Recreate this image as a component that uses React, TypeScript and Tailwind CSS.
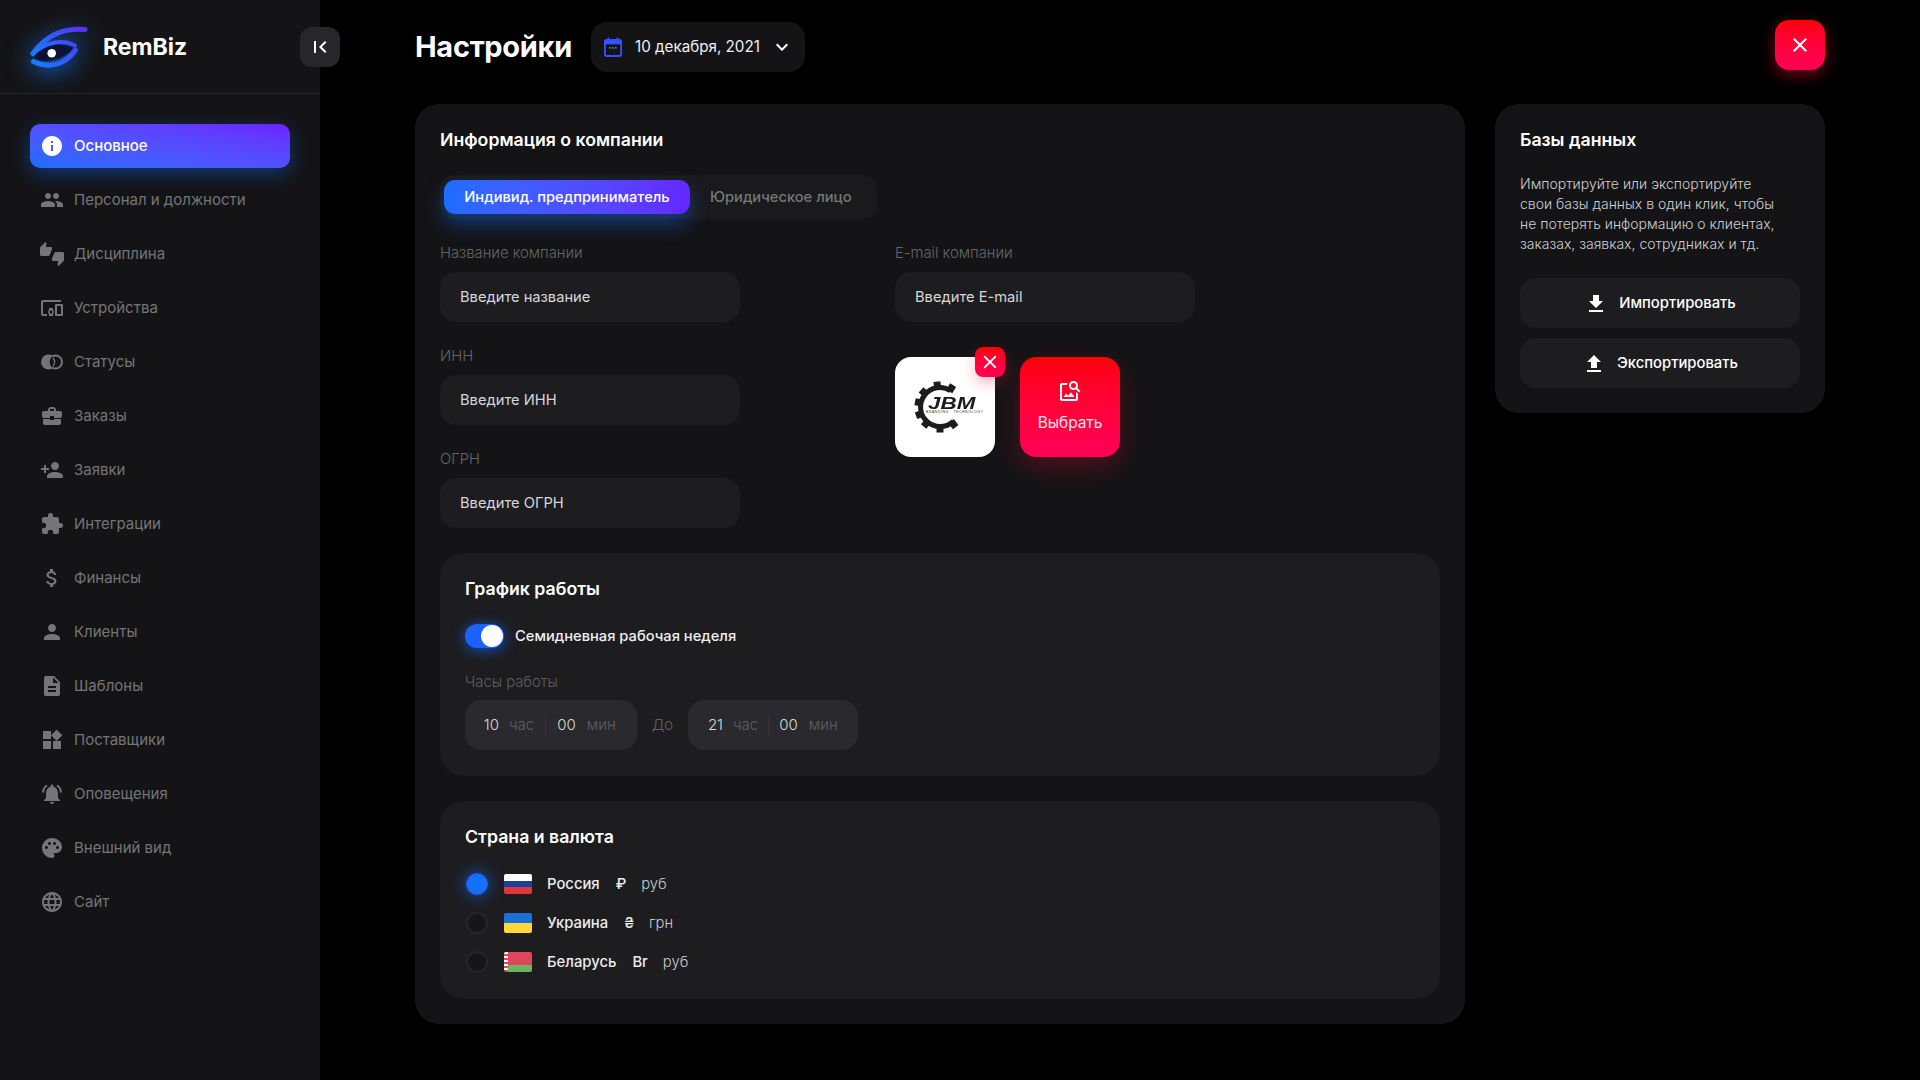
import type { ReactNode } from "react";
import {
  MdAttachMoney,
  MdBusinessCenter,
  MdClose,
  MdDescription,
  MdDevicesOther,
  MdExtension,
  MdFileDownload,
  MdFileUpload,
  MdFirstPage,
  MdImageSearch,
  MdInfo,
  MdKeyboardArrowDown,
  MdLanguage,
  MdNotificationsActive,
  MdPalette,
  MdPeople,
  MdPerson,
  MdPersonAdd,
  MdThumbsUpDown,
  MdWidgets,
} from "react-icons/md";

const FONT = "font-['Inter','Liberation_Sans',sans-serif]";

function StatusIcon({ className }: { className?: string }) {
  return (
    <svg viewBox="0 0 24 24" className={className} fill="none">
      <circle cx="8.5" cy="12" r="7.5" fill="currentColor" />
      <circle cx="15.5" cy="12" r="6.5" fill="#141416" stroke="currentColor" strokeWidth="2" />
      <path d="M12 6.6a7.5 7.5 0 0 1 0 10.8a7.5 7.5 0 0 1 0-10.8Z" fill="#141416" />
      <path d="M13 8a6 6 0 0 1 0 8" stroke="currentColor" strokeWidth="1.5" />
    </svg>
  );
}

const NAV: { label: string; icon: (c: string) => ReactNode }[] = [
  { label: "Персонал и должности", icon: (c) => <MdPeople className={c} /> },
  { label: "Дисциплина", icon: (c) => <MdThumbsUpDown className={c} /> },
  { label: "Устройства", icon: (c) => <MdDevicesOther className={c} /> },
  { label: "Статусы", icon: (c) => <StatusIcon className={c} /> },
  { label: "Заказы", icon: (c) => <MdBusinessCenter className={c} /> },
  { label: "Заявки", icon: (c) => <MdPersonAdd className={c} /> },
  { label: "Интеграции", icon: (c) => <MdExtension className={c} /> },
  { label: "Финансы", icon: (c) => <MdAttachMoney className={c} /> },
  { label: "Клиенты", icon: (c) => <MdPerson className={c} /> },
  { label: "Шаблоны", icon: (c) => <MdDescription className={c} /> },
  { label: "Поставщики", icon: (c) => <MdWidgets className={c} /> },
  { label: "Оповещения", icon: (c) => <MdNotificationsActive className={c} /> },
  { label: "Внешний вид", icon: (c) => <MdPalette className={c} /> },
  { label: "Сайт", icon: (c) => <MdLanguage className={c} /> },
];

function Logo() {
  return (
    <svg
      viewBox="0 0 60 44"
      className="h-[44px] w-[60px] shrink-0 drop-shadow-[0_5px_12px_rgba(20,120,255,0.75)]"
      fill="none"
      strokeLinecap="round"
    >
      <defs>
        <linearGradient id="logoGrad" gradientUnits="userSpaceOnUse" x1="3" y1="40" x2="56" y2="4">
          <stop offset="0" stopColor="#1580ff" />
          <stop offset="0.6" stopColor="#3a52ff" />
          <stop offset="1" stopColor="#6030f0" />
        </linearGradient>
      </defs>
      <path d="M6 29C16 20 32 16 44 23C36 34 18 39 6 34Z" fill="#0b1438" />
      <path d="M56 4.5C38 3 20 7 4 28.5" stroke="url(#logoGrad)" strokeWidth="5" />
      <path d="M4 28.5C16 18 32 13 46 20.5" stroke="url(#logoGrad)" strokeWidth="4" />
      <path d="M4.5 36.5C20 44 36 40 46.5 25" stroke="url(#logoGrad)" strokeWidth="5" />
      <circle cx="22.7" cy="28.3" r="4.3" fill="#fff" />
    </svg>
  );
}

function CalendarIcon() {
  return (
    <svg viewBox="0 0 20 22" className="h-[20px] w-[18px] shrink-0" fill="none">
      <rect x="1" y="3" width="18" height="18" rx="2" stroke="#3452ff" strokeWidth="2" />
      <path d="M1 3h18v5H1z" fill="#3452ff" />
      <path d="M5 0.5v3M15 0.5v3" stroke="#3452ff" strokeWidth="2" />
      <path d="M6 12h1.6M9.2 12h1.6M12.4 12H14" stroke="#9fa8ff" strokeWidth="1.6" />
    </svg>
  );
}

function JbmLogo() {
  const teeth = [-97, -59, -138, -168, 160, 130, 90, 52];
  return (
    <div className="relative h-[100px] w-[100px] rounded-[16px] bg-white">
      <svg viewBox="0 0 100 100" className="h-full w-full">
        <path d="M55.6 33.6A19.5 19.5 0 1 0 58.3 64.3" fill="none" stroke="#1c1c1c" strokeWidth="5" />
        {teeth.map((a) => (
          <rect key={a} x="63" y="46.5" width="7.5" height="7" fill="#1c1c1c" transform={`rotate(${a} 45 50)`} />
        ))}
      </svg>
      <div className="absolute left-[33px] top-[37px] origin-left scale-x-[1.4] text-[16px] leading-[19px] font-bold italic text-[#1c1c1c] font-['Liberation_Sans',sans-serif]">
        JBM
      </div>
      <div className="absolute left-[31px] top-[53px] text-[3.5px] leading-[4px] tracking-[0.55px] whitespace-nowrap text-[#333] font-['Liberation_Sans',sans-serif]">
        BRANDING &nbsp; TECHNOLOGY
      </div>
      <div className="absolute -right-[10px] -top-[10px] flex h-[30px] w-[30px] items-center justify-center rounded-[8px] bg-linear-to-b from-[#ff0000] to-[#ff0055] shadow-[0_6px_14px_rgba(255,30,60,0.3)]">
        <MdClose className="h-[22px] w-[22px] text-white" />
      </div>
    </div>
  );
}

function Field({ label, placeholder }: { label: string; placeholder: string }) {
  return (
    <div className="w-[300px]">
      <div className="mb-[10px] h-[18px] text-[14.8px] leading-[18px] font-light text-[#66666a]">{label}</div>
      <div className="flex h-[50px] items-center rounded-[16px] bg-[#1d1d20] px-[20px] text-[14.7px] text-[#d6d6d8]">
        {placeholder}
      </div>
    </div>
  );
}

function TimeBox({
  hours,
  mins,
  className,
  dividerClass,
}: {
  hours: string;
  mins: string;
  className: string;
  dividerClass: string;
}) {
  return (
    <div className={`flex h-[50px] items-center rounded-[16px] bg-[#2a2a2e] pt-[1px] text-[15px] font-light ${className}`}>
      <span className="w-[30px] text-right text-[#d8d8da]">{hours}</span>
      <span className="ml-[10px] text-[#5f5f63]">час</span>
      <span className={`h-[20px] w-px bg-[#37373b] ${dividerClass}`} />
      <span className="text-[#d8d8da]">{mins}</span>
      <span className="ml-[11px] text-[#5f5f63]">мин</span>
    </div>
  );
}

function Flag({ country }: { country: "ru" | "ua" | "by" }) {
  return (
    <div className="flex h-[20px] w-[28px] shrink-0 flex-col overflow-hidden rounded-[2px]">
      {country === "ru" && (
        <>
          <div className="flex-1 bg-white" />
          <div className="flex-1 bg-[#1a3f9c]" />
          <div className="flex-1 bg-[#e0383a]" />
        </>
      )}
      {country === "ua" && (
        <>
          <div className="flex-1 bg-[#1b6fd6]" />
          <div className="flex-1 bg-[#ffd83d]" />
        </>
      )}
      {country === "by" && (
        <div className="flex h-full">
          <div className="w-[4px] bg-[repeating-linear-gradient(180deg,#fff_0,#fff_2px,#e0455a_2px,#e0455a_4px)]" />
          <div className="flex flex-1 flex-col">
            <div className="flex-[2] bg-[#e0455a]" />
            <div className="flex-1 bg-[#69b565]" />
          </div>
        </div>
      )}
    </div>
  );
}

function CountryRow({
  country,
  name,
  symbol,
  unit,
  active,
}: {
  country: "ru" | "ua" | "by";
  name: string;
  symbol: string;
  unit: string;
  active?: boolean;
}) {
  return (
    <div className="flex h-[22px] items-center pl-[1px]">
      <div
        className={
          active
            ? "h-[22px] w-[22px] rounded-full border border-[#2b55e8] bg-[#1570ff] shadow-[0_0_16px_rgba(20,110,255,0.75)]"
            : "h-[22px] w-[22px] rounded-full border-2 border-[#26262a] bg-[#161618]"
        }
      />
      <div className="ml-[16px] mr-[15px]">
        <Flag country={country} />
      </div>
      <span className="text-[14.8px] font-medium text-[#ececee]">{name}</span>
      <span className="ml-[16px] text-[14.8px] font-medium text-[#ececee]">{symbol}</span>
      <span className="ml-[15px] text-[14.8px] font-light text-[#c8c8ca]">{unit}</span>
    </div>
  );
}

function ActionButton({ icon, label }: { icon: ReactNode; label: string }) {
  return (
    <div className="flex h-[50px] items-center justify-center gap-[11px] rounded-[16px] bg-[#1d1d20] pt-[1px] text-[14.8px] font-medium text-white">
      {icon}
      {label}
    </div>
  );
}

export default function App() {
  return (
    <div className={`${FONT} relative flex h-[1080px] w-[1920px] overflow-hidden bg-black text-white`}>
      <aside className="h-full w-[320px] shrink-0 bg-[#141416]">
        <div className="flex h-[94px] items-center gap-[14px] border-b border-[#262628] pl-[29px]">
          <Logo />
          <span className="pt-[2px] text-[23px] font-bold">RemBiz</span>
        </div>
        <nav className="flex flex-col gap-[10px] px-[30px] pt-[30px]">
          <div className="flex h-[44px] items-center rounded-[10px] bg-linear-to-tr from-[#1a6dff] to-[#6a22ff] pl-[10px] text-[15px] font-medium shadow-[0_6px_20px_rgba(15,110,255,0.4)]">
            <MdInfo className="h-[24px] w-[24px]" />
            <span className="ml-[10px]">Основное</span>
          </div>
          {NAV.map((item) => (
            <div key={item.label} className="flex h-[44px] items-center pl-[10px] text-[15px] text-[#757578]">
              {item.icon("h-[24px] w-[24px] text-[#757578]")}
              <span className="ml-[10px]">{item.label}</span>
            </div>
          ))}
        </nav>
      </aside>

      <div className="absolute left-[300px] top-[27px] flex h-[40px] w-[40px] items-center justify-center rounded-[12px] bg-[#27272b]">
        <MdFirstPage className="h-[24px] w-[24px] text-white" />
      </div>

      <main className="min-w-0 flex-1 pl-[95px] pr-[95px]">
        <header className="flex h-[104px] items-start pt-[22px]">
          <h1 className="flex h-[50px] w-[176px] items-center text-[29px] font-bold tracking-[-0.3px]">Настройки</h1>
          <div className="flex h-[50px] w-[214px] items-center rounded-[16px] bg-[#141416] pl-[13px] text-[15.2px]">
            <CalendarIcon />
            <span className="ml-[13px] text-[#f0f0f2]">10 декабря, 2021</span>
            <MdKeyboardArrowDown className="ml-[10px] h-[24px] w-[24px] text-white" />
          </div>
          <div className="ml-auto -mt-[2px] flex h-[50px] w-[50px] items-center justify-center rounded-[14px] bg-linear-to-b from-[#ff0000] to-[#ff0055] shadow-[0_5px_16px_rgba(255,0,50,0.45)]">
            <MdClose className="h-[24px] w-[24px] text-white" />
          </div>
        </header>

        <div className="flex items-start gap-[30px]">
          <section className="h-[920px] w-[1050px] rounded-[24px] bg-[#141416] p-[25px]">
            <h2 className="h-[22px] text-[17.7px] leading-[22px] font-semibold">Информация о компании</h2>

            <div className="mt-[24px] flex h-[44px] w-[437px] items-center rounded-[14px] bg-[#1a1a1d] pl-[4px] text-[14.7px] font-medium">
              <div className="flex h-[34px] w-[246px] items-center justify-center rounded-[11px] bg-linear-to-r from-[#1a6dff] to-[#6426ff] text-white shadow-[0_10px_20px_rgba(15,110,255,0.4)]">
                Индивид. предприниматель
              </div>
              <div className="ml-[20px] text-[#77777a]">Юридическое лицо</div>
            </div>

            <div className="mt-[25px] flex gap-[155px]">
              <div className="flex flex-col gap-[25px]">
                <Field label="Название компании" placeholder="Введите название" />
                <Field label="ИНН" placeholder="Введите ИНН" />
                <Field label="ОГРН" placeholder="Введите ОГРН" />
              </div>
              <div>
                <Field label="E-mail компании" placeholder="Введите E-mail" />
                <div className="mt-[35px] flex gap-[25px]">
                  <JbmLogo />
                  <div className="flex h-[100px] w-[100px] flex-col items-center justify-center rounded-[16px] bg-linear-to-b from-[#ff0000] to-[#ff0055] shadow-[0_10px_24px_rgba(255,0,50,0.25)]">
                    <MdImageSearch className="h-[24px] w-[24px] text-white" />
                    <span className="mt-[8px] text-[15.4px] text-[#ffe4ea]">Выбрать</span>
                  </div>
                </div>
              </div>
            </div>

            <div className="mt-[25px] h-[223px] rounded-[24px] bg-[#1d1d20] px-[25px] pt-[25px]">
              <h3 className="h-[22px] text-[17.7px] leading-[22px] font-semibold">График работы</h3>
              <div className="mt-[24px] flex h-[24px] items-center">
                <div className="flex h-[24px] w-[39px] items-center justify-end rounded-full bg-[#1c62ff] pr-[1px] shadow-[0_2px_14px_rgba(20,100,255,0.7)]">
                  <div className="h-[22px] w-[22px] rounded-full bg-white" />
                </div>
                <span className="ml-[11px] text-[14.7px] font-medium text-[#f0f0f2]">Семидневная рабочая неделя</span>
              </div>
              <div className="mt-[25px] h-[18px] text-[14.8px] leading-[18px] font-light text-[#5f5f63]">Часы работы</div>
              <div className="mt-[9px] flex items-center">
                <TimeBox hours="10" mins="00" className="w-[172px] pl-[4px]" dividerClass="ml-[11px] mr-[11px]" />
                <span className="w-[51px] text-center text-[15px] font-light text-[#5f5f63]">До</span>
                <TimeBox hours="21" mins="00" className="w-[170px] pl-[5px]" dividerClass="ml-[10px] mr-[10px]" />
              </div>
            </div>

            <div className="mt-[25px] h-[198px] rounded-[24px] bg-[#1d1d20] px-[25px] pt-[25px]">
              <h3 className="h-[22px] text-[17.7px] leading-[22px] font-semibold">Страна и валюта</h3>
              <div className="mt-[25px] flex flex-col gap-[17px]">
                <CountryRow country="ru" name="Россия" symbol="₽" unit="руб" active />
                <CountryRow country="ua" name="Украина" symbol="₴" unit="грн" />
                <CountryRow country="by" name="Беларусь" symbol="Br" unit="руб" />
              </div>
            </div>
          </section>

          <section className="h-[309px] w-[330px] rounded-[24px] bg-[#141416] p-[25px]">
            <h2 className="h-[22px] text-[17.7px] leading-[22px] font-semibold">Базы данных</h2>
            <p className="mt-[23px] text-[14px] leading-[20px] font-light whitespace-nowrap text-[#cfcfd2]">
              Импортируйте или экспортируйте
              <br />
              свои базы данных в один клик, чтобы
              <br />
              не потерять информацию о клиентах,
              <br />
              заказах, заявках, сотрудниках и тд.
            </p>
            <div className="mt-[24px] flex flex-col gap-[10px]">
              <ActionButton icon={<MdFileDownload className="h-[24px] w-[24px]" />} label="Импортировать" />
              <ActionButton icon={<MdFileUpload className="h-[24px] w-[24px]" />} label="Экспортировать" />
            </div>
          </section>
        </div>
      </main>
    </div>
  );
}
